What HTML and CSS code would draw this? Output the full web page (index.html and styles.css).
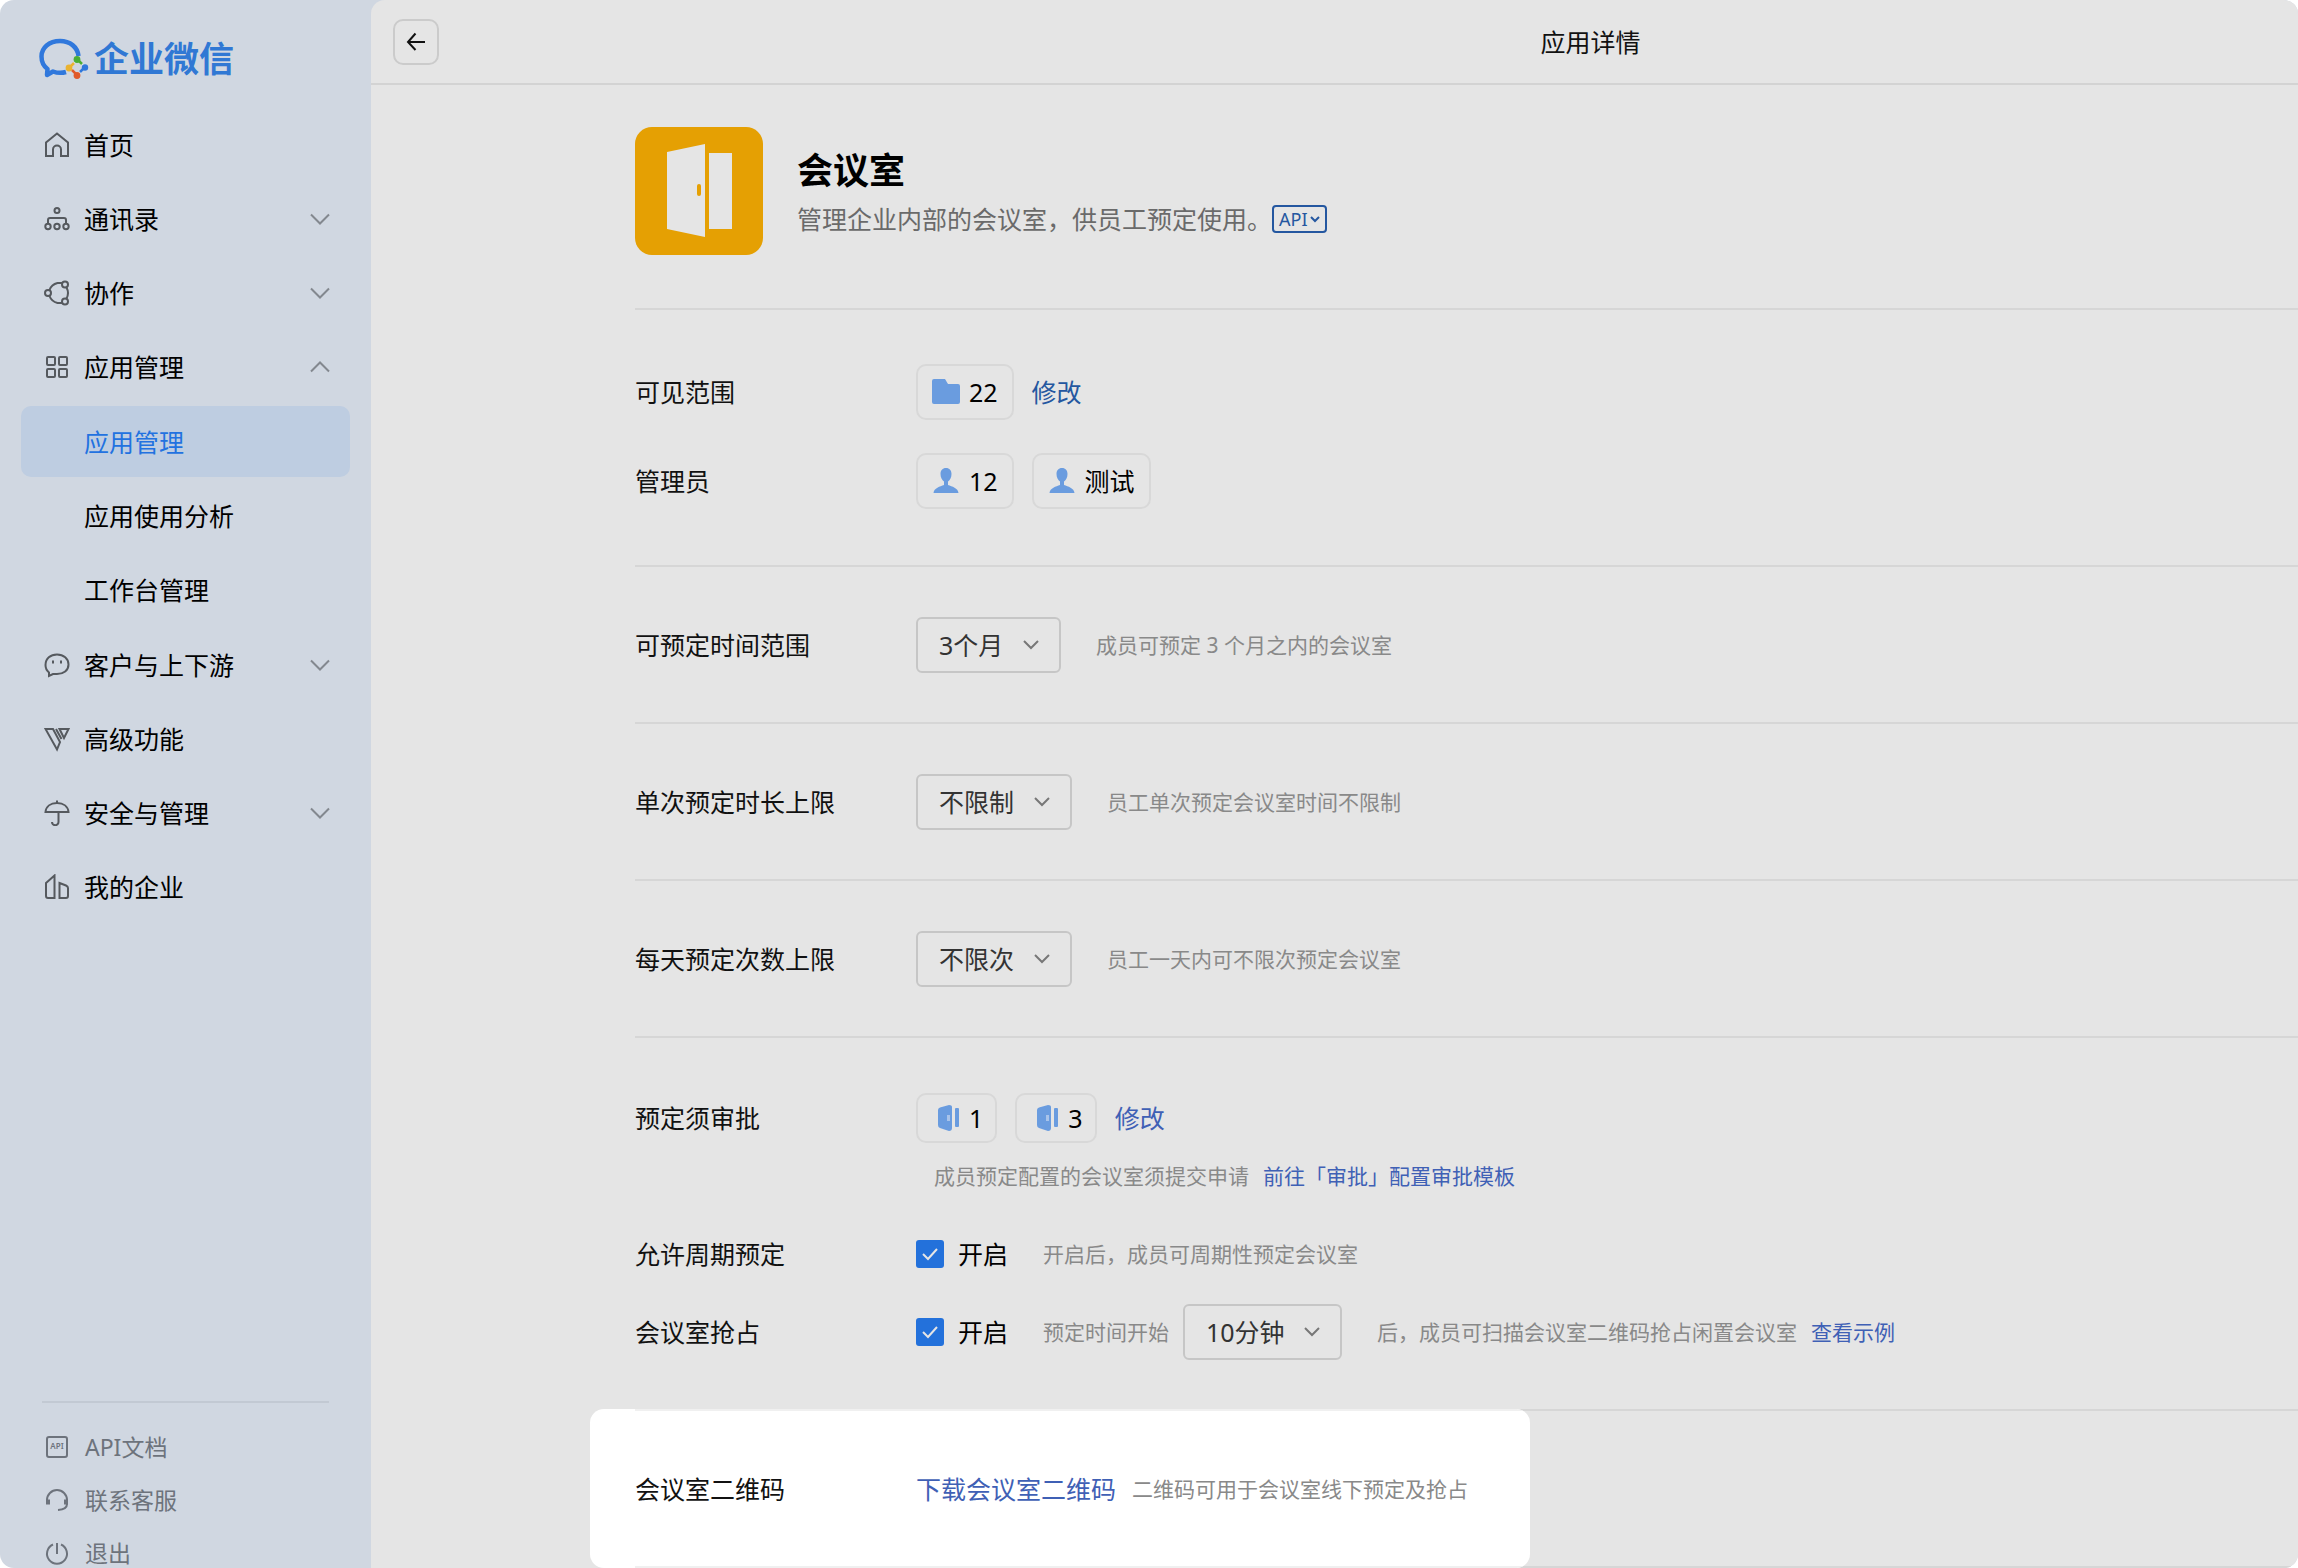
FILE: index.html
```html
<!DOCTYPE html>
<html lang="zh-CN">
<head>
    <meta charset="UTF-8">
    <meta name="viewport" content="width=device-width, initial-scale=1.0">
    <title>应用详情 - 企业微信</title>
    <link rel="stylesheet" href="styles.css">
</head>
<body>
    <div class="page">
        <aside class="sidebar">
            <a class="logo" href="#">
                <svg width="50" height="42" viewBox="0 0 50 42" fill="none">
                    <path d="M39.5 18C38.5 9 31 3 21 3C10 3 2.500 10 2.500 18.500C2.500 23.500 4.500 28 8.500 31L8 37L14 33.500C18 35 23 35.200 27 34" stroke="#3078dc" stroke-width="4.500" stroke-linejoin="round"/>
                    <path d="M31 29L38 22L46 29L38.500 37Z" stroke="#dfe5ec" stroke-width="2"/>
                    <circle cx="38" cy="21.500" r="3.400" fill="#4aae35"/>
                    <path d="M38 21L43 26" stroke="#4aae35" stroke-width="2.500"/>
                    <circle cx="30" cy="30" r="3.400" fill="#eab331"/>
                    <path d="M30 30L35 25" stroke="#eab331" stroke-width="2.500"/>
                    <circle cx="38" cy="37.500" r="3.400" fill="#e05a2b"/>
                    <path d="M38 37L33 32" stroke="#e05a2b" stroke-width="2.500"/>
                    <circle cx="46" cy="29.500" r="3.200" fill="#3078dc"/>
                    <path d="M46 29L41 34" stroke="#3078dc" stroke-width="2.500"/>
                </svg>
                <span>企业微信</span>
            </a>
            <nav>
                <ul class="menu">
                    <li><a class="menu-item" href="#">
                        <svg class="icon" viewBox="0 0 26 26"><path d="M2 10.500L13 1.500L24 10.500V24H17V17.500A4 4 0 0 0 9 17.500V24H2Z"/></svg>
                        首页
                    </a></li>
                    <li><a class="menu-item" href="#">
                        <svg class="icon" viewBox="0 0 26 26"><circle cx="13" cy="4.500" r="2.500"/><path d="M4 17V14Q4 12 6 12H20Q22 12 22 14V17"/><circle cx="4" cy="20.500" r="2.700"/><circle cx="13" cy="20.500" r="2.700"/><circle cx="22" cy="20.500" r="2.700"/></svg>
                        通讯录
                        <svg class="arrow" viewBox="0 0 20 12"><path d="M1 1.500L10 10.500L19 1.500"/></svg>
                    </a></li>
                    <li><a class="menu-item" href="#">
                        <svg class="icon" viewBox="0 0 26 26"><circle cx="4" cy="13" r="3"/><circle cx="21" cy="4.500" r="3"/><circle cx="21" cy="21.500" r="3"/><path d="M18 3H13.500Q7.500 4.500 5.500 10M5.500 16Q7.500 21.500 13.500 23H18M22.500 7.500Q25.500 13 22.500 18.500"/></svg>
                        协作
                        <svg class="arrow" viewBox="0 0 20 12"><path d="M1 1.500L10 10.500L19 1.500"/></svg>
                    </a></li>
                    <li>
                        <a class="menu-item" href="#">
                            <svg class="icon" viewBox="0 0 26 26"><rect x="3" y="3" width="8" height="8" rx="1"/><rect x="15" y="3" width="8" height="8" rx="1"/><rect x="3" y="15" width="8" height="8" rx="1"/><rect x="15" y="15" width="8" height="8" rx="1"/></svg>
                            应用管理
                            <svg class="arrow" viewBox="0 0 20 12"><path d="M1 10.500L10 1.500L19 10.500"/></svg>
                        </a>
                        <ul class="submenu">
                            <li><a class="menu-item active" href="#">应用管理</a></li>
                            <li><a class="menu-item" href="#">应用使用分析</a></li>
                            <li><a class="menu-item" href="#">工作台管理</a></li>
                        </ul>
                    </li>
                    <li><a class="menu-item" href="#">
                        <svg class="icon" viewBox="0 0 26 26"><path d="M5 24V20.500C2.500 18.500 1.500 16 1.500 13C1.500 6.500 6.500 2.500 13 2.500S24.500 6.500 24.500 12.500S19.500 22 13 22H9Z"/><path d="M9 8.500V11.500M17 8.500V11.500"/></svg>
                        客户与上下游
                        <svg class="arrow" viewBox="0 0 20 12"><path d="M1 1.500L10 10.500L19 1.500"/></svg>
                    </a></li>
                    <li><a class="menu-item" href="#">
                        <svg class="icon" viewBox="0 0 26 26"><path d="M1.500 3H9L16 16L13 23.500Z"/><path d="M12 3L17.500 13M15.500 3H24.500L20 12Z"/></svg>
                        高级功能
                    </a></li>
                    <li><a class="menu-item" href="#">
                        <svg class="icon" viewBox="0 0 26 26"><path d="M1.500 12C2 6.500 6.500 3 13 3S24 6.500 24.500 12ZM13 0.500V3M14.500 12V22A3 3 0 0 1 8 22"/></svg>
                        安全与管理
                        <svg class="arrow" viewBox="0 0 20 12"><path d="M1 1.500L10 10.500L19 1.500"/></svg>
                    </a></li>
                    <li><a class="menu-item" href="#">
                        <svg class="icon" viewBox="0 0 26 26"><path d="M2 9L10.500 1.500V24H4Q2 24 2 22ZM15.500 9L22 11.500Q24 12.500 24 14V22Q24 24 22 24H15.500Z"/></svg>
                        我的企业
                    </a></li>
                </ul>
            </nav>
            <ul class="side-footer">
                <li><a href="#">
                    <svg class="icon" viewBox="0 0 26 26"><rect x="3" y="3" width="20" height="20" rx="2"/><text class="icon-text" x="13" y="15">API</text></svg>
                    API文档
                </a></li>
                <li><a href="#">
                    <svg class="icon" viewBox="0 0 26 26"><path d="M3 16V13A10 10 0 0 1 23 13V17Q23 22.500 14 23"/><path d="M4 12.500V17.500M22 12.500V17.500" stroke-width="4"/></svg>
                    联系客服
                </a></li>
                <li><a href="#">
                    <svg class="icon" viewBox="0 0 26 26"><path d="M9 4.500A10 10 0 1 0 17 4.500M13 3V14"/></svg>
                    退出
                </a></li>
            </ul>
        </aside>

        <main class="main">
            <header class="topbar">
                <button class="back-btn" type="button" aria-label="返回">
                    <svg width="20" height="20" viewBox="0 0 20 20"><path d="M9.500 1.500L2 10L9.500 18M2 10H19"/></svg>
                </button>
                <h1>应用详情</h1>
            </header>

            <div class="content">
                <section class="app-info">
                    <svg class="app-icon" viewBox="0 0 128 128">
                        <rect width="128" height="128" rx="17" fill="#e5a003"/>
                        <path d="M32 25L70 17V110L32 102Z" fill="#e5e5e5"/>
                        <rect x="74" y="26" width="23" height="76" fill="#e5e5e5"/>
                        <rect x="62" y="57" width="4" height="12" rx="2" fill="#e5a003"/>
                    </svg>
                    <div>
                        <h2>会议室</h2>
                        <p>
                            管理企业内部的会议室，供员工预定使用。
                            <button class="api-btn" type="button">API<svg width="10" height="7" viewBox="0 0 10 7"><path d="M1 1L5 5L9 1"/></svg></button>
                        </p>
                    </div>
                </section>

                <section class="section scope">
                    <div class="row">
                        <span class="label">可见范围</span>
                        <span class="chip">
                            <svg width="28" height="26" viewBox="0 0 28 26"><path d="M0 2Q0 0 2 0H13L16 5H26Q28 5 28 7V23Q28 25 26 25H2Q0 25 0 23Z"/></svg>
                            22
                        </span>
                        <a class="link dark" href="#">修改</a>
                    </div>
                    <div class="row">
                        <span class="label">管理员</span>
                        <span class="chip">
                            <svg width="28" height="26" viewBox="0 0 28 26"><path d="M14 0C17.500 0 19.500 2.500 19.500 6C19.500 9.500 18 12 16 13.500V17C20 18.500 26 20 26.500 25H1.500C2 20 8 18.500 12 17V13.500C10 12 8.500 9.500 8.500 6C8.500 2.500 10.500 0 14 0Z"/></svg>
                            12
                        </span>
                        <span class="chip">
                            <svg width="28" height="26" viewBox="0 0 28 26"><path d="M14 0C17.500 0 19.500 2.500 19.500 6C19.500 9.500 18 12 16 13.500V17C20 18.500 26 20 26.500 25H1.500C2 20 8 18.500 12 17V13.500C10 12 8.500 9.500 8.500 6C8.500 2.500 10.500 0 14 0Z"/></svg>
                            测试
                        </span>
                    </div>
                </section>

                <section class="section">
                    <div class="row">
                        <label class="label" for="book-range">可预定时间范围</label>
                        <select id="book-range"><option>3个月</option></select>
                        <span class="hint">成员可预定 3 个月之内的会议室</span>
                    </div>
                </section>

                <section class="section">
                    <div class="row">
                        <label class="label" for="book-length">单次预定时长上限</label>
                        <select id="book-length"><option>不限制</option></select>
                        <span class="hint">员工单次预定会议室时间不限制</span>
                    </div>
                </section>

                <section class="section">
                    <div class="row">
                        <label class="label" for="book-times">每天预定次数上限</label>
                        <select id="book-times"><option>不限次</option></select>
                        <span class="hint">员工一天内可不限次预定会议室</span>
                    </div>
                </section>

                <section class="section approval">
                    <div class="row">
                        <span class="label">预定须审批</span>
                        <span class="chip room">
                            <svg width="22" height="26" viewBox="0 0 22 26"><path d="M0 5Q0 3 2 2.500L11 0Q14 0 14 2V23Q14 26 11 26L2 23Q0 22.500 0 20Z"/><rect x="17" y="3" width="4" height="19" rx="1"/><path class="knob" d="M9 10H12V16H9Z"/></svg>
                            1
                        </span>
                        <span class="chip room">
                            <svg width="22" height="26" viewBox="0 0 22 26"><path d="M0 5Q0 3 2 2.500L11 0Q14 0 14 2V23Q14 26 11 26L2 23Q0 22.500 0 20Z"/><rect x="17" y="3" width="4" height="19" rx="1"/><path class="knob" d="M9 10H12V16H9Z"/></svg>
                            3
                        </span>
                        <a class="link" href="#">修改</a>
                    </div>
                    <p class="note">
                        成员预定配置的会议室须提交申请
                        <a class="link" href="#">前往「审批」配置审批模板</a>
                    </p>
                    <div class="row check-row">
                        <span class="label">允许周期预定</span>
                        <label class="check"><input type="checkbox" checked>开启</label>
                        <span class="hint">开启后，成员可周期性预定会议室</span>
                    </div>
                    <div class="row">
                        <span class="label">会议室抢占</span>
                        <label class="check"><input type="checkbox" checked>开启</label>
                        <label class="hint before-select" for="grab-delay">预定时间开始</label>
                        <select id="grab-delay"><option>10分钟</option></select>
                        <span class="hint">后，成员可扫描会议室二维码抢占闲置会议室</span>
                        <a class="link small" href="#">查看示例</a>
                    </div>
                </section>

                <section class="qrcode">
                    <div class="spotlight">
                        <div class="row">
                            <span class="label">会议室二维码</span>
                            <a class="link" href="#">下载会议室二维码</a>
                            <span class="hint">二维码可用于会议室线下预定及抢占</span>
                        </div>
                    </div>
                </section>
            </div>
        </main>
    </div>
</body>
</html>
```

FILE: styles.css
```css
* {
    box-sizing: border-box;
}
body {
    margin: 0;
    background-color: #fff;
    color: #111;
    font-family: "Noto Sans", "Noto Sans CJK SC", sans-serif;
    font-size: 25px;
    line-height: 36px;
}
h1, h2, p, ul {
    margin: 0;
    padding: 0;
}
ul {
    list-style: none;
}
a {
    text-decoration: none;
    color: inherit;
}
button, select {
    font: inherit;
    color: inherit;
    background: none;
    cursor: pointer;
}
svg {
    flex-shrink: 0;
}
.page {
    display: flex;
    height: 100vh;
    overflow: hidden;
    background-color: #d0d7e1;
    border-radius: 14px;
}

/* sidebar */
.sidebar {
    display: flex;
    flex-direction: column;
    flex-shrink: 0;
    width: 371px;
    padding: 0 21px;
}
.logo {
    display: flex;
    align-items: center;
    gap: 5px;
    height: 109px;
    padding: 9px 0 0 18px;
    color: #3078d4;
    font-size: 35px;
    font-weight: 700;
}
.menu > li, .submenu li {
    margin-bottom: 3px;
}
.submenu {
    padding: 4px 0 1px;
}
.submenu li:last-child {
    margin-bottom: 0;
}
.submenu .menu-item {
    padding-left: 63px;
}
.menu-item {
    display: flex;
    align-items: center;
    gap: 14px;
    height: 71px;
    padding: 0 20px 0 23px;
    border-radius: 10px;
    color: #000;
}
.menu-item.active {
    background-color: #becde1;
    color: #2272e0;
}
.icon {
    width: 26px;
    height: 26px;
    fill: none;
    stroke: #55595e;
    stroke-width: 2;
}
.icon-text {
    fill: #6d737c;
    stroke: none;
    font-size: 8px;
    font-weight: 600;
    text-anchor: middle;
}
.arrow {
    width: 20px;
    height: 12px;
    margin-left: auto;
    fill: none;
    stroke: #83888f;
    stroke-width: 2;
}
.side-footer {
    margin: auto 21px -11px;
    padding-top: 17px;
    border-top: 2px solid #c2c9d3;
    font-size: 23px;
    color: #6d737c;
}
.side-footer a {
    display: flex;
    align-items: center;
    gap: 15px;
    height: 53px;
    padding-left: 2px;
}
.side-footer .icon {
    stroke: #6d737c;
}

/* main column */
.main {
    flex: 1;
    min-width: 0;
    background-color: #e5e5e5;
    border-top-left-radius: 14px;
}
.topbar {
    display: flex;
    align-items: center;
    height: 85px;
    padding-left: 22px;
    border-bottom: 2px solid #d3d3d3;
}
.topbar h1 {
    flex: 1;
    padding-left: 444px;
    font-size: 25px;
    font-weight: 400;
    text-align: center;
}
.back-btn {
    display: flex;
    align-items: center;
    justify-content: center;
    width: 46px;
    height: 46px;
    padding: 0;
    border: 2px solid #cbcbcb;
    border-radius: 10px;
}
.back-btn svg {
    fill: none;
    stroke: #111;
    stroke-width: 2;
}
.content {
    padding-left: 264px;
}
.app-info {
    display: flex;
    gap: 34px;
    padding: 42px 0 53px;
    border-bottom: 2px solid #d6d6d6;
}
.app-icon {
    width: 128px;
    height: 128px;
}
.app-info h2 {
    margin-top: 18px;
    color: #000;
    font-size: 36px;
    font-weight: 700;
    line-height: 52px;
}
.app-info p {
    display: flex;
    align-items: center;
    margin-top: 4px;
    color: #6a6a6a;
}
.api-btn {
    display: flex;
    align-items: center;
    gap: 2px;
    height: 28px;
    padding: 0 5px;
    border: 2px solid #2457a0;
    border-radius: 4px;
    color: #2457a0;
    font-size: 18px;
}
.api-btn svg {
    fill: none;
    stroke: #2457a0;
    stroke-width: 2;
}
.section {
    padding: 50px 0 49px;
    border-bottom: 2px solid #d6d6d6;
}
.row {
    display: flex;
    align-items: center;
}
.label {
    width: 281px;
}
.scope {
    padding: 54px 0 56px;
}
.scope .row + .row {
    margin-top: 33px;
}
.chip {
    display: flex;
    align-items: center;
    gap: 9px;
    height: 56px;
    margin-right: 18px;
    padding: 0 14px;
    border: 2px solid #d8d8d8;
    border-radius: 10px;
    color: #000;
}
.chip svg {
    fill: #6a9cdf;
}
.chip.room {
    height: 50px;
    padding: 0 12px 0 20px;
}
.chip .knob {
    fill: #a9c4ea;
}
.link {
    color: #3f60b5;
}
.link.dark {
    color: #2457a0;
}
.hint, .note {
    color: #898989;
    font-size: 21px;
}
.link.small {
    margin-left: 14px;
    font-size: 21px;
}
.hint {
    margin-left: 35px;
}
.hint.before-select {
    margin-right: 14px;
}
select {
    appearance: none;
    height: 56px;
    padding: 0 55px 0 21px;
    border: 2px solid #c6c6c6;
    border-radius: 6px;
    color: #333;
    background: url("data:image/svg+xml,%3Csvg xmlns='http://www.w3.org/2000/svg' width='16' height='10' fill='none' stroke='%23777' stroke-width='2'%3E%3Cpath d='M1 1L8 8L15 1'/%3E%3C/svg%3E") no-repeat right 20px center;
}
.approval {
    padding-top: 55px;
}
.note {
    display: flex;
    gap: 14px;
    margin: 15px 0 42px 299px;
}
.check-row {
    margin-bottom: 32px;
}
.check {
    display: flex;
    align-items: center;
    gap: 14px;
    color: #000;
}
.check input {
    appearance: none;
    width: 28px;
    height: 28px;
    margin: 0;
    border-radius: 3px;
    background: #2371db url("data:image/svg+xml,%3Csvg xmlns='http://www.w3.org/2000/svg' width='18' height='14' fill='none' stroke='%23e5e5e5' stroke-width='2'%3E%3Cpath d='M2 7L7 12L16 2'/%3E%3C/svg%3E") no-repeat center;
}

/* highlighted row at the bottom */
.qrcode {
    margin-top: -2px;
    border-bottom: 2px solid #d6d6d6;
}
.spotlight {
    width: fit-content;
    margin: 0 0 -2px -45px;
    padding-left: 45px;
    border-radius: 14px;
    background-color: #fff;
    overflow: hidden;
}
.spotlight .row {
    padding: 60px 62px 59px 0;
    border-top: 2px solid #f0f0f0;
    border-bottom: 2px solid #f0f0f0;
}
.spotlight .hint {
    margin-left: 16px;
}
```
